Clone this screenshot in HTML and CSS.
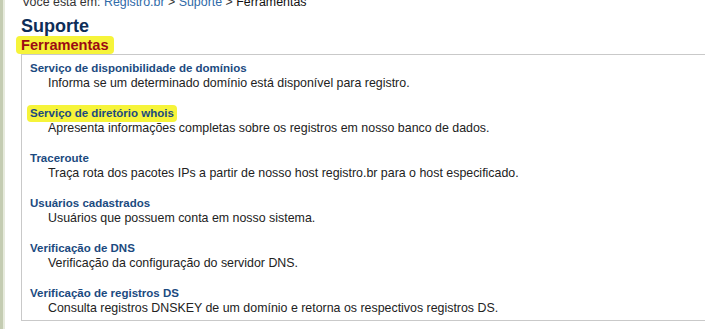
FILE: index.html
```html
<!DOCTYPE html>
<html lang="pt-BR">
<head>
<meta charset="utf-8">
<title>Suporte - Ferramentas</title>
<link rel="stylesheet" href="styles.css">
</head>
<body>
<div class="page">
  <div class="rail"></div>
  <div class="rail-light"></div>
  <div class="main">
    <div class="crumbs">Você está em: <a href="#">Registro.br</a> &gt; <a href="#">Suporte</a> &gt; <span class="here">Ferramentas</span></div>
    <h1 class="title">Suporte</h1>
    <h2 class="subtitle"><span class="mark mark-sub">Ferramentas</span></h2>
    <ul class="tools">
      <li class="tool">
        <a class="tool-name" href="#">Serviço de disponibilidade de domínios</a>
        <div class="tool-desc">Informa se um determinado domínio está disponível para registro.</div>
      </li>
      <li class="tool">
        <a class="tool-name" href="#"><span class="mark mark-item">Serviço de diretório whois</span></a>
        <div class="tool-desc">Apresenta informações completas sobre os registros em nosso banco de dados.</div>
      </li>
      <li class="tool">
        <a class="tool-name" href="#">Traceroute</a>
        <div class="tool-desc">Traça rota dos pacotes IPs a partir de nosso host registro.br para o host especificado.</div>
      </li>
      <li class="tool">
        <a class="tool-name" href="#">Usuários cadastrados</a>
        <div class="tool-desc">Usuários que possuem conta em nosso sistema.</div>
      </li>
      <li class="tool">
        <a class="tool-name" href="#">Verificação de DNS</a>
        <div class="tool-desc">Verificação da configuração do servidor DNS.</div>
      </li>
      <li class="tool">
        <a class="tool-name" href="#">Verificação de registros DS</a>
        <div class="tool-desc">Consulta registros DNSKEY de um domínio e retorna os respectivos registros DS.</div>
      </li>
    </ul>
  </div>
</div>
</body>
</html>
```
FILE: styles.css
```css
html, body {
  margin: 0;
  padding: 0;
  background: #ffffff;
}
body {
  font-family: "Liberation Sans", Arial, sans-serif;
  color: #222222;
  overflow: hidden;
}
.page {
  display: flex;
  min-height: 329px;
}
.rail {
  width: 3px;
  background: #c4ccb2;
  flex: none;
}
.rail-light {
  width: 2px;
  background: #e6eadc;
  flex: none;
}
.main {
  flex: 1;
  display: flex;
  flex-direction: column;
  padding-left: 16px;
}
.crumbs {
  margin-top: -5px;
  height: 14px;
  line-height: 14px;
  font-size: 12.4px;
  color: #333333;
  padding-left: 1px;
  white-space: nowrap;
}
.crumbs a {
  color: #2f6aa8;
  text-decoration: none;
}
.crumbs .here {
  color: #111111;
}
.title {
  margin: 7px 0 0 0;
  font-size: 18px;
  line-height: 20px;
  font-weight: bold;
  color: #0d2d58;
}
.subtitle {
  margin: 0;
  font-size: 14.6px;
  line-height: 17px;
  font-weight: bold;
  color: #9c0a14;
}
.mark {
  background: #f6f43a;
  border-radius: 4px;
}
.mark-sub {
  display: inline-block;
  padding: 0 5px;
  margin-left: -5px;
  line-height: 18px;
}
.mark-item {
  padding: 2px 3px 3px 3px;
  margin-left: -3px;
}
.tools {
  list-style: none;
  margin: 0;
  padding: 6px 0 4px 8px;
  border-top: 1px solid #c9c9c9;
  border-left: 1px solid #c9c9c9;
  border-bottom: 1px solid #c9c9c9;
  height: 255px;
  box-sizing: content-box;
}
.tool {
  margin-bottom: 15px;
}
.tool:last-child {
  margin-bottom: 0;
}
.tool-name {
  display: block;
  font-size: 11.5px;
  line-height: 15px;
  font-weight: bold;
  color: #1b4a80;
  text-decoration: none;
}
.tool-desc {
  font-size: 12.4px;
  line-height: 15px;
  color: #222222;
  padding-left: 18px;
}
```
